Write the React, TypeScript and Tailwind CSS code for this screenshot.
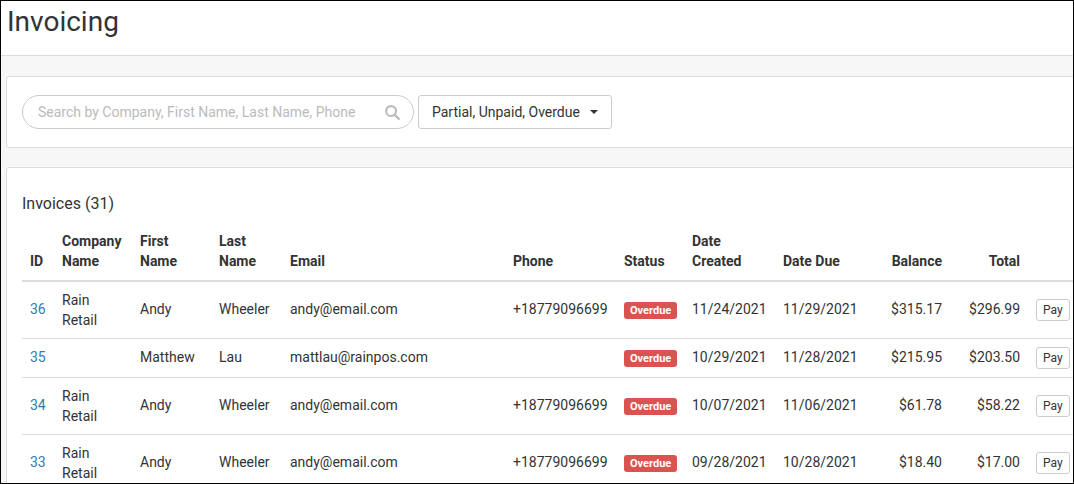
export default function App() {
  const rows = [
    { id: "36", co: ["Rain", "Retail"], f: "Andy", l: "Wheeler", e: "andy@email.com", p: "+18779096699", c: "11/24/2021", d: "11/29/2021", b: "$315.17", t: "$296.99", h: "h-[57px]" },
    { id: "35", co: [], f: "Matthew", l: "Lau", e: "mattlau@rainpos.com", p: "", c: "10/29/2021", d: "11/28/2021", b: "$215.95", t: "$203.50", h: "h-[39px]" },
    { id: "34", co: ["Rain", "Retail"], f: "Andy", l: "Wheeler", e: "andy@email.com", p: "+18779096699", c: "10/07/2021", d: "11/06/2021", b: "$61.78", t: "$58.22", h: "h-[57px]" },
    { id: "33", co: ["Rain", "Retail"], f: "Andy", l: "Wheeler", e: "andy@email.com", p: "+18779096699", c: "09/28/2021", d: "10/28/2021", b: "$18.40", t: "$17.00", h: "h-[57px]" },
  ];
  const th = "px-2 pb-[9px] pt-0 align-bottom font-bold text-left leading-5";
  return (
    <div className="w-[1074px] h-[484px] overflow-hidden border border-black bg-[#f7f7f7] text-[#333] text-[14px]" style={{ fontFamily: "Roboto, sans-serif" }}>
      <div className="bg-white h-[55px] border-b border-[#ddd] px-[6px] flex items-center">
        <h1 className="text-[28px] leading-none text-[#333] font-normal -mt-3">Invoicing</h1>
      </div>
      <div className="pl-[5px] pt-[20px]">
        <div className="w-[1090px] bg-white border border-[#ddd] rounded-[3px] h-[72px] flex items-center pl-[15px] gap-[4px]">
          <div className="w-[392px] h-[34px] rounded-full border border-[#ccc] flex items-center pl-[15px] pr-[12px] justify-between">
            <span className="text-[#bbb]">Search by Company, First Name, Last Name, Phone</span>
            <svg width="17" height="17" viewBox="0 0 24 24" fill="none" stroke="#bbb" strokeWidth="3"><circle cx="10" cy="10" r="7" /><path d="M15 15l6 6" strokeLinecap="round" /></svg>
          </div>
          <div className="h-[34px] border border-[#ccc] rounded-[3px] px-[13px] flex items-center gap-[10px]">
            <span>Partial, Unpaid, Overdue</span>
            <span className="w-0 h-0 border-x-[4px] border-x-transparent border-t-[4px] border-t-[#333]" />
          </div>
        </div>
        <div className="mt-[19px] w-[1090px] bg-white border border-[#ddd] rounded-[3px] pl-[15px] pt-[24px] h-[400px]">
          <div className="text-[16px] mb-[15px]">Invoices (31)</div>
          <table className="table-fixed border-collapse w-[1060px]">
            <thead>
              <tr className="border-b-2 border-[#ddd] h-[50px]">
                <th className={th + " w-[32px]"}>ID</th>
                <th className={th + " w-[78px]"}>Company<br />Name</th>
                <th className={th + " w-[79px]"}>First<br />Name</th>
                <th className={th + " w-[71px]"}>Last<br />Name</th>
                <th className={th + " w-[223px]"}>Email</th>
                <th className={th + " w-[111px]"}>Phone</th>
                <th className={th + " w-[68px]"}>Status</th>
                <th className={th + " w-[91px]"}>Date<br />Created</th>
                <th className={th + " w-[80px]"}>Date Due</th>
                <th className={th + " w-[95px] !text-right"}>Balance</th>
                <th className={th + " w-[78px] !text-right"}>Total</th>
                <th className={th + " w-[54px]"}></th>
              </tr>
            </thead>
            <tbody>
              {rows.map((r) => (
                <tr key={r.id} className={"border-b border-[#ddd] " + r.h}>
                  <td className="px-2 text-[#337ab7]">{r.id}</td>
                  <td className="px-2 leading-5">{r.co.length ? <>{r.co[0]}<br />{r.co[1]}</> : null}</td>
                  <td className="px-2">{r.f}</td>
                  <td className="px-2">{r.l}</td>
                  <td className="px-2">{r.e}</td>
                  <td className="px-2">{r.p}</td>
                  <td className="px-2"><span className="inline-block bg-[#d9534f] text-white text-[11px] font-bold rounded-[3px] px-[6px] leading-[17px]">Overdue</span></td>
                  <td className="px-2">{r.c}</td>
                  <td className="px-2">{r.d}</td>
                  <td className="px-2 text-right">{r.b}</td>
                  <td className="px-2 text-right">{r.t}</td>
                  <td className="px-2"><span className="inline-block border border-[#ccc] rounded-[3px] text-[12px] px-[6px] leading-[20px]">Pay</span></td>
                </tr>
              ))}
            </tbody>
          </table>
        </div>
      </div>
    </div>
  );
}
